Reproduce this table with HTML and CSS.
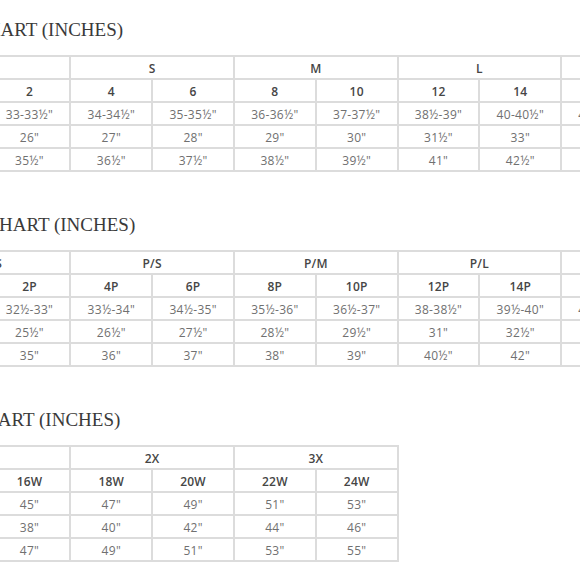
FILE: index.html
```html
<!DOCTYPE html>
<html lang="en">
<head>
<meta charset="utf-8">
<title>Size Charts</title>
<link rel="stylesheet" href="styles.css">
</head>
<body>
<div class="viewport">
  <div class="charts">
    <section class="chart">
      <h2 class="chart-title chart-title--misses">MISSES SIZE CHART (INCHES)</h2>
      <div class="grid grid--11">
        <div class="cell head"></div>
        <div class="cell head span2">XS</div>
        <div class="cell head span2">S</div>
        <div class="cell head span2">M</div>
        <div class="cell head span2">L</div>
        <div class="cell head span2">XL</div>

        <div class="cell head">SIZE</div>
        <div class="cell head">0</div><div class="cell head">2</div><div class="cell head">4</div><div class="cell head">6</div><div class="cell head">8</div><div class="cell head">10</div><div class="cell head">12</div><div class="cell head">14</div><div class="cell head">16</div><div class="cell head">18</div>

        <div class="cell head">BUST</div>
        <div class="cell">32-32½"</div><div class="cell">33-33½"</div><div class="cell">34-34½"</div><div class="cell">35-35½"</div><div class="cell">36-36½"</div><div class="cell">37-37½"</div><div class="cell">38½-39"</div><div class="cell">40-40½"</div><div class="cell">41½-42"</div><div class="cell">43-43½"</div>

        <div class="cell head">WAIST</div>
        <div class="cell">25"</div><div class="cell">26"</div><div class="cell">27"</div><div class="cell">28"</div><div class="cell">29"</div><div class="cell">30"</div><div class="cell">31½"</div><div class="cell">33"</div><div class="cell">34½"</div><div class="cell">36"</div>

        <div class="cell head">HIP</div>
        <div class="cell">34½"</div><div class="cell">35½"</div><div class="cell">36½"</div><div class="cell">37½"</div><div class="cell">38½"</div><div class="cell">39½"</div><div class="cell">41"</div><div class="cell">42½"</div><div class="cell">44"</div><div class="cell">45½"</div>
      </div>
    </section>

    <section class="chart">
      <h2 class="chart-title chart-title--petites">PETITES SIZE CHART (INCHES)</h2>
      <div class="grid grid--11">
        <div class="cell head"></div>
        <div class="cell head span2">P/XS</div>
        <div class="cell head span2">P/S</div>
        <div class="cell head span2">P/M</div>
        <div class="cell head span2">P/L</div>
        <div class="cell head span2">P/XL</div>

        <div class="cell head">SIZE</div>
        <div class="cell head">0P</div><div class="cell head">2P</div><div class="cell head">4P</div><div class="cell head">6P</div><div class="cell head">8P</div><div class="cell head">10P</div><div class="cell head">12P</div><div class="cell head">14P</div><div class="cell head">16P</div><div class="cell head">18P</div>

        <div class="cell head">BUST</div>
        <div class="cell">31½-32"</div><div class="cell">32½-33"</div><div class="cell">33½-34"</div><div class="cell">34½-35"</div><div class="cell">35½-36"</div><div class="cell">36½-37"</div><div class="cell">38-38½"</div><div class="cell">39½-40"</div><div class="cell">41-41½"</div><div class="cell">42½-43"</div>

        <div class="cell head">WAIST</div>
        <div class="cell">24½"</div><div class="cell">25½"</div><div class="cell">26½"</div><div class="cell">27½"</div><div class="cell">28½"</div><div class="cell">29½"</div><div class="cell">31"</div><div class="cell">32½"</div><div class="cell">34"</div><div class="cell">35½"</div>

        <div class="cell head">HIP</div>
        <div class="cell">34"</div><div class="cell">35"</div><div class="cell">36"</div><div class="cell">37"</div><div class="cell">38"</div><div class="cell">39"</div><div class="cell">40½"</div><div class="cell">42"</div><div class="cell">43½"</div><div class="cell">45"</div>
      </div>
    </section>

    <section class="chart">
      <h2 class="chart-title chart-title--women">WOMEN’S SIZE CHART (INCHES)</h2>
      <div class="grid grid--7">
        <div class="cell head"></div>
        <div class="cell head span2">1X</div>
        <div class="cell head span2">2X</div>
        <div class="cell head span2">3X</div>

        <div class="cell head">SIZE</div>
        <div class="cell head">14W</div><div class="cell head">16W</div><div class="cell head">18W</div><div class="cell head">20W</div><div class="cell head">22W</div><div class="cell head">24W</div>

        <div class="cell head">BUST</div>
        <div class="cell">43"</div><div class="cell">45"</div><div class="cell">47"</div><div class="cell">49"</div><div class="cell">51"</div><div class="cell">53"</div>

        <div class="cell head">WAIST</div>
        <div class="cell">36"</div><div class="cell">38"</div><div class="cell">40"</div><div class="cell">42"</div><div class="cell">44"</div><div class="cell">46"</div>

        <div class="cell head">HIP</div>
        <div class="cell">45"</div><div class="cell">47"</div><div class="cell">49"</div><div class="cell">51"</div><div class="cell">53"</div><div class="cell">55"</div>
      </div>
    </section>
  </div>
</div>
</body>
</html>
```
FILE: styles.css
```css
html, body {
  margin: 0;
  padding: 0;
  background: #ffffff;
}

.viewport {
  width: 580px;
  height: 580px;
  overflow: hidden;
}

.charts {
  display: flex;
  flex-direction: column;
  gap: 41px;
  margin-left: -176px;
  padding-top: 18px;
}

.chart {
  display: flex;
  flex-direction: column;
  gap: 13px;
}

.chart-title {
  margin: 0;
  font-family: "Liberation Serif", "Times New Roman", serif;
  font-size: 19px;
  line-height: 24px;
  font-weight: 400;
  color: #3a3a3a;
  white-space: nowrap;
}

.chart-title--misses { padding-left: 34px; }
.chart-title--petites { padding-left: 38.8px; }
.chart-title--women { padding-left: 7px; }

.grid {
  display: grid;
  grid-auto-rows: 23px;
  border-top: 2px solid #dcdcdc;
  border-left: 2px solid #dcdcdc;
  width: max-content;
  font-family: "Open Sans", "Liberation Sans", sans-serif;
  font-size: 12px;
}

.grid--11 { grid-template-columns: repeat(11, 81.8px); }
.grid--7 { grid-template-columns: repeat(7, 81.8px); }

.cell {
  box-sizing: border-box;
  border-right: 2px solid #dcdcdc;
  border-bottom: 2px solid #dcdcdc;
  display: flex;
  align-items: center;
  justify-content: center;
  white-space: nowrap;
  color: #707070;
  font-weight: 400;
  letter-spacing: 0.3px;
  padding-top: 1px;
}

.head {
  color: #454545;
  font-weight: 600;
  letter-spacing: 0.2px;
}

.span2 {
  grid-column: span 2;
}
```
